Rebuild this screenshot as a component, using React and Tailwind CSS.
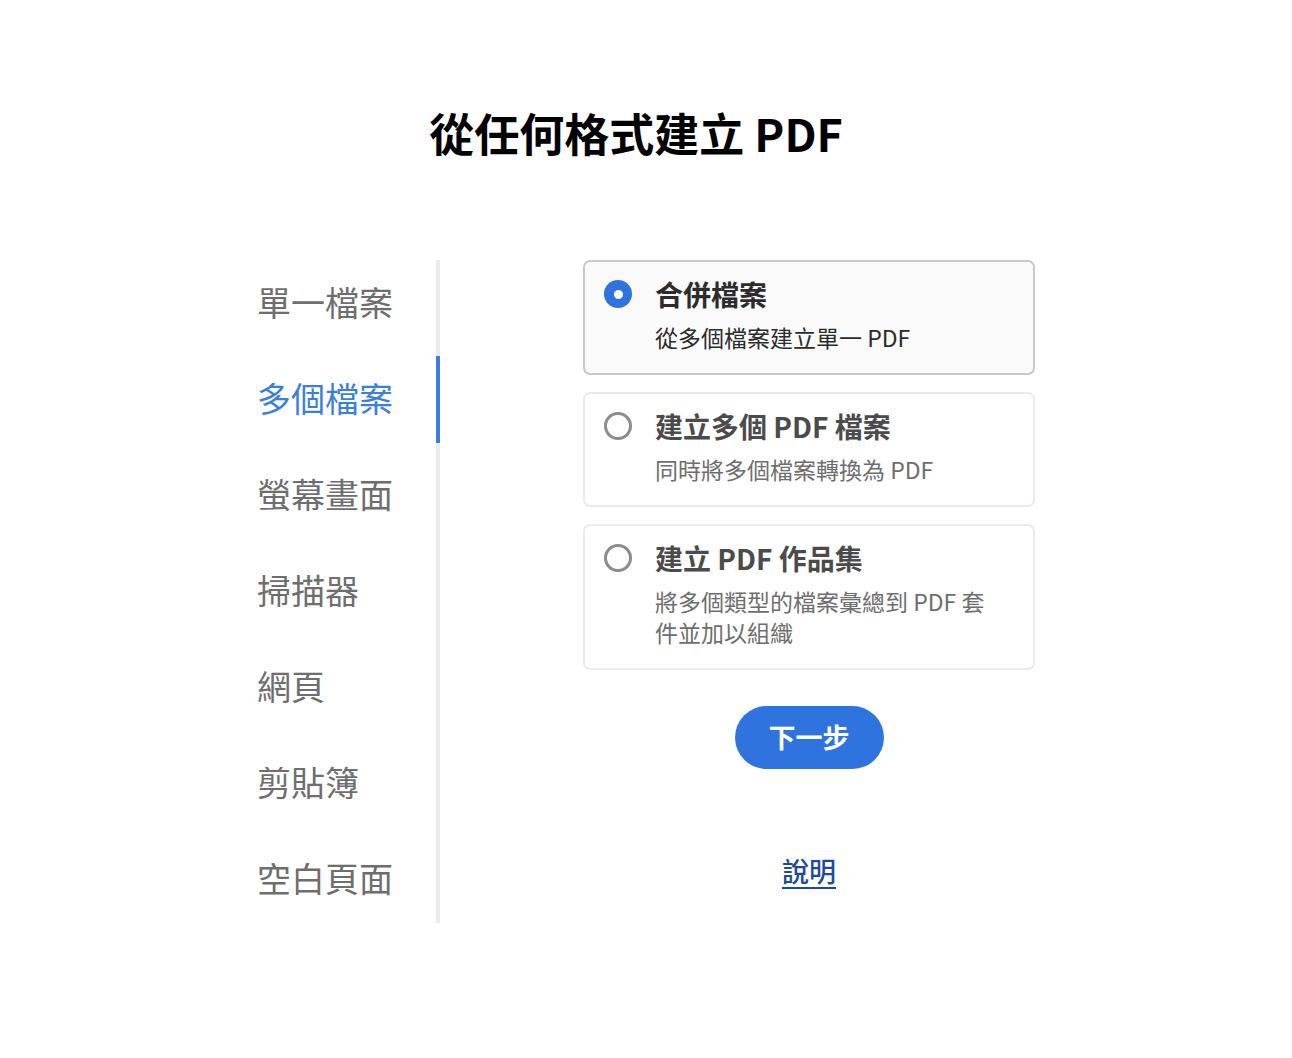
import React, { useState } from 'react';

const NAV_ITEMS = ['單一檔案', '多個檔案', '螢幕畫面', '掃描器', '網頁', '剪貼簿', '空白頁面'];

const OPTIONS = [
    { id: 'combine', title: '合併檔案', desc: '從多個檔案建立單一 PDF' },
    { id: 'multiple', title: '建立多個 PDF 檔案', desc: '同時將多個檔案轉換為 PDF' },
    { id: 'portfolio', title: '建立 PDF 作品集', desc: '將多個類型的檔案彙總到 PDF 套件並加以組織' },
];

const Radio = ({ checked }) => (
    checked ? (
        <span className="w-[28px] h-[28px] rounded-full bg-[#2f74de] flex items-center justify-center shrink-0">
            <span className="w-[9px] h-[9px] rounded-full bg-white"></span>
        </span>
    ) : (
        <span className="w-[28px] h-[28px] rounded-full border-[3.5px] border-[#8c8c8c] bg-white shrink-0"></span>
    )
);

const App = () => {
    const [activeNav, setActiveNav] = useState(1);
    const [selected, setSelected] = useState('combine');

    return (
        <div
            className="min-h-screen bg-white flex flex-col items-center"
            style={{ fontFamily: '"Noto Sans CJK TC", "Noto Sans", sans-serif' }}
        >
            {/* Title */}
            <h1 className="pt-[105px] pr-[20px] text-[45px] leading-[56px] font-bold text-black">
                從任何格式建立 PDF
            </h1>

            <div className="mt-[99px] flex">
                {/* Side nav */}
                <nav className="w-[183px] border-r-4 border-[#ebebeb] flex flex-col gap-[9px]">
                    {NAV_ITEMS.map((item, i) => (
                        <button
                            key={item}
                            onClick={() => setActiveNav(i)}
                            className={`h-[87px] pb-[5px] -mr-[4px] border-r-4 flex items-center text-left text-[34px] ${i === activeNav ? 'border-[#3a7fdd] text-[#3a7fdd]' : 'border-transparent text-[#6e6e6e]'}`}
                        >
                            {item}
                        </button>
                    ))}
                </nav>

                {/* Options */}
                <div className="ml-[143px] w-[452px] flex flex-col">
                    <div className="flex flex-col gap-[17px]">
                        {OPTIONS.map(opt => {
                            const isOn = selected === opt.id;
                            return (
                                <button
                                    key={opt.id}
                                    onClick={() => setSelected(opt.id)}
                                    className={`flex text-left rounded-[7px] border-2 pl-[19px] pr-[36px] pt-[14px] pb-[20px] ${isOn ? 'bg-[#fafafa] border-[#c9c9c9]' : 'bg-white border-[#ebebeb]'}`}
                                >
                                    <div className="h-[36px] flex items-center">
                                        <Radio checked={isOn} />
                                    </div>
                                    <div className="ml-[23px] flex flex-col">
                                        <div className={`text-[28px] leading-[36px] font-bold ${isOn ? 'text-[#2c2c2c]' : 'text-[#4b4b4b]'}`}>
                                            {opt.title}
                                        </div>
                                        <div className={`mt-[10px] text-[23px] leading-[31px] ${isOn ? 'text-[#2c2c2c]' : 'text-[#6e6e6e]'}`}>
                                            {opt.desc}
                                        </div>
                                    </div>
                                </button>
                            );
                        })}
                    </div>

                    <button className="mt-[36px] self-center h-[63px] px-[34px] rounded-full bg-[#2f74de] text-white text-[27px] font-bold">
                        下一步
                    </button>

                    <a
                        href="#"
                        className="mt-[84px] self-center text-[27px] leading-[36px] font-medium text-[#1f4b96] underline decoration-2 underline-offset-[5px]"
                    >
                        說明
                    </a>
                </div>
            </div>
        </div>
    );
};

export default App;
